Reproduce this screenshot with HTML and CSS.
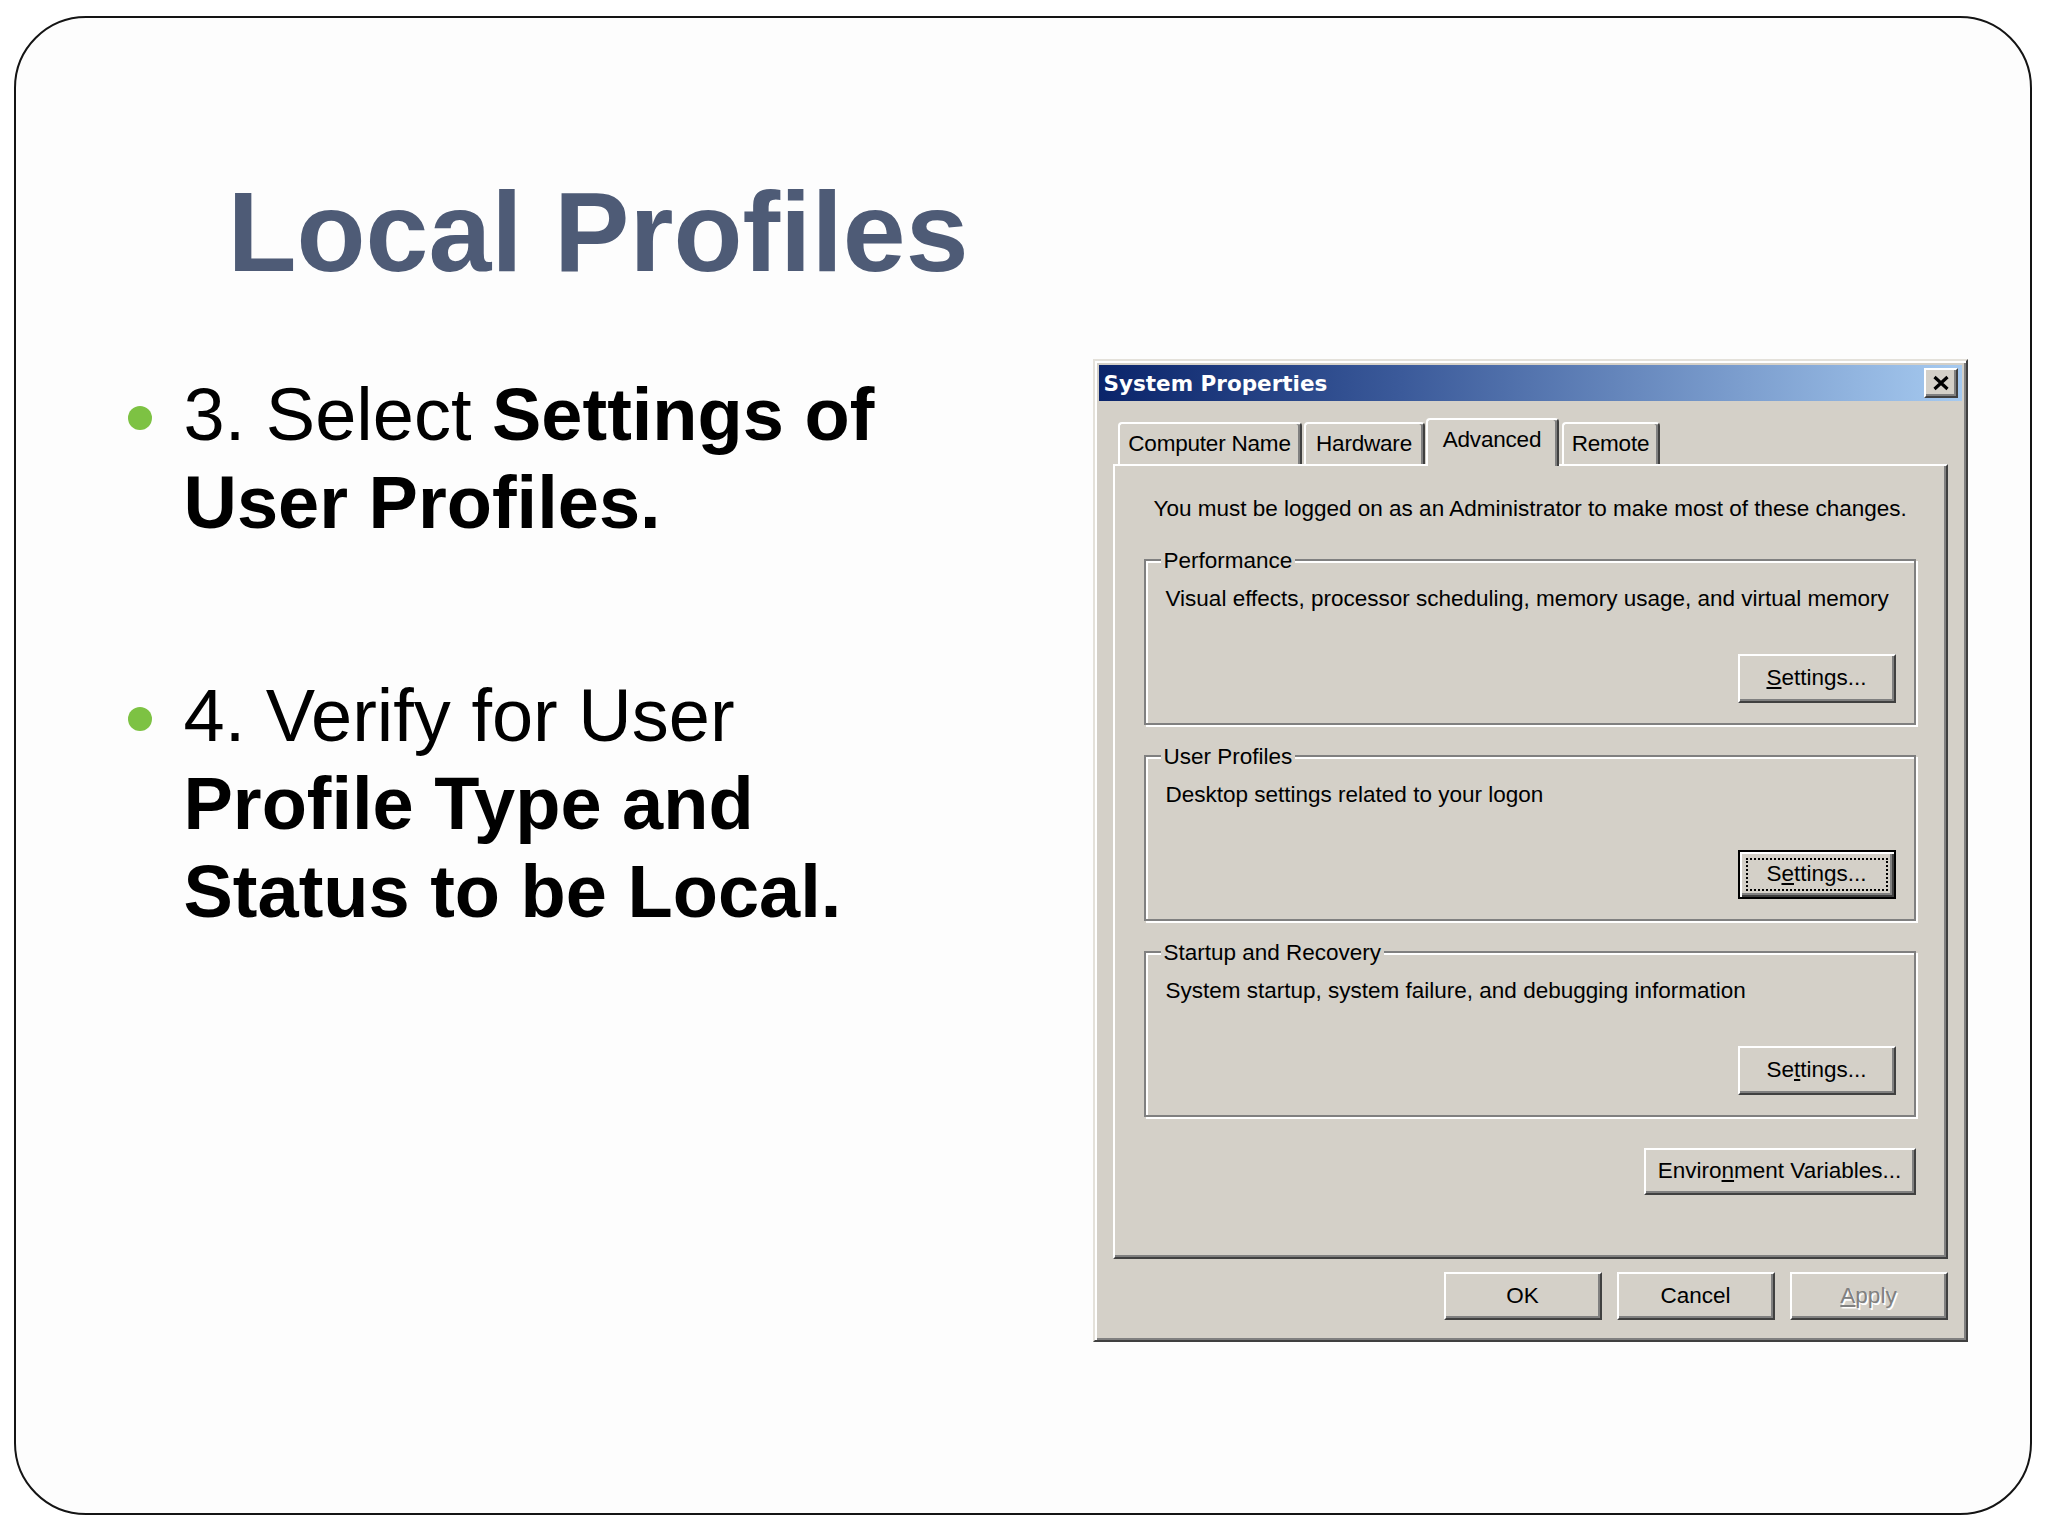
FILE: index.html
```html
<!DOCTYPE html>
<html lang="en">
<head>
<meta charset="utf-8">
<title>Local Profiles</title>
<link rel="stylesheet" href="styles.css">
</head>
<body>
<div class="slide">
  <h1 class="title">Local Profiles</h1>
  <div class="content">
    <ul class="points">
      <li>3. Select <b>Settings of</b><br><b>User Profiles.</b></li>
      <li>4. Verify for User<br><b>Profile Type and</b><br><b>Status to be Local.</b></li>
    </ul>

    <div class="dialog">
      <div class="titlebar">
        <span class="caption">System Properties</span>
        <span class="close">
          <svg width="18" height="16" viewBox="0 0 18 16"><path d="M2.5 2 L15.5 14 M15.5 2 L2.5 14" stroke="#000" stroke-width="3.2" fill="none"/></svg>
        </span>
      </div>
      <div class="tabs">
        <div class="tab tab-cn">Computer Name</div>
        <div class="tab tab-hw">Hardware</div>
        <div class="tab tab-adv">Advanced</div>
        <div class="tab tab-rm">Remote</div>
      </div>
      <div class="panel">
        <div class="note">You must be logged on as an Administrator to make most of these changes.</div>
        <div class="group group-first">
          <span class="legend">Performance</span>
          <div class="desc">Visual effects, processor scheduling, memory usage, and virtual memory</div>
          <div class="btn btn-group"><u>S</u>ettings...</div>
        </div>
        <div class="group">
          <span class="legend">User Profiles</span>
          <div class="desc">Desktop settings related to your logon</div>
          <div class="btn btn-group btn-focus">S<u>e</u>ttings...</div>
        </div>
        <div class="group">
          <span class="legend">Startup and Recovery</span>
          <div class="desc">System startup, system failure, and debugging information</div>
          <div class="btn btn-group">Se<u>t</u>tings...</div>
        </div>
        <div class="btn btn-env">Enviro<u>n</u>ment Variables...</div>
      </div>
      <div class="actions">
        <div class="btn btn-action">OK</div>
        <div class="btn btn-action">Cancel</div>
        <div class="btn btn-action btn-disabled"><u>A</u>pply</div>
      </div>
    </div>
  </div>
</div>
</body>
</html>
```
FILE: styles.css
```css
* {
  box-sizing: border-box;
}

html,
body {
  margin: 0;
  padding: 0;
  background: #ffffff;
}

body {
  width: 2048px;
  height: 1536px;
  overflow: hidden;
  font-family: "Liberation Sans", Arial, sans-serif;
}

.slide {
  margin: 16px 0 0 14px;
  width: 2018px;
  height: 1499px;
  border: 2.5px solid #141414;
  border-radius: 72px;
  background: #fdfdfd;
  padding: 157.5px 62.5px 0 0;
}

.title {
  margin: 0;
  padding-left: 211.5px;
  font-size: 113px;
  line-height: 112px;
  font-weight: 700;
  color: #4e5b76;
}

.content {
  display: flex;
  justify-content: space-between;
  align-items: flex-start;
  margin-top: 71px;
  padding-left: 167.5px;
}

.points {
  list-style: none;
  margin: 0;
  padding: 12px 0 0;
  width: 760px;
  font-size: 74px;
  line-height: 88px;
  color: #000;
  white-space: nowrap;
}

.points li {
  position: relative;
}

.points li + li {
  margin-top: 125px;
}

.points li::before {
  content: "";
  position: absolute;
  left: -56px;
  top: 35px;
  width: 24px;
  height: 24px;
  border-radius: 50%;
  background: #7dc243;
}

/* ---------- Windows dialog ---------- */

.dialog {
  width: 875px;
  height: 983px;
  display: flex;
  flex-direction: column;
  background: #d4d0c8;
  border: 2px solid;
  border-color: #e4e1da #404040 #404040 #e4e1da;
  box-shadow: inset 2px 2px #ffffff, inset -2px -2px #808080;
  padding: 4px;
  font-size: 22.5px;
  color: #000;
}

.titlebar {
  height: 36px;
  display: flex;
  align-items: center;
  justify-content: space-between;
  padding: 0 4px 0 5px;
  background: linear-gradient(to right, #0a246a 0%, #3b5a9a 35%, #a6caf0 100%);
}

.caption {
  font-family: "DejaVu Sans", sans-serif;
  font-weight: 700;
  font-size: 21.5px;
  color: #ffffff;
  padding-top: 2px;
}

.close {
  width: 34px;
  height: 30px;
  display: flex;
  align-items: center;
  justify-content: center;
  background: #d4d0c8;
  border: 2px solid;
  border-color: #ffffff #404040 #404040 #ffffff;
  box-shadow: inset -2px -2px #808080;
}

.tabs {
  display: flex;
  align-items: flex-end;
  height: 46px;
  margin: 17px 14px 0;
  padding-left: 5px;
}

.tab {
  height: 42px;
  border: 2px solid;
  border-bottom: 0;
  border-color: #ffffff #404040 transparent #ffffff;
  box-shadow: inset -2px 0 #808080;
  border-radius: 4px 4px 0 0;
  padding-top: 6px;
  text-align: center;
  line-height: 28px;
  white-space: nowrap;
  letter-spacing: -0.2px;
}

.tab-cn {
  width: 184px;
  margin-right: 2px;
}

.tab-hw {
  width: 121px;
}

.tab-adv {
  width: 133px;
  height: 48px;
  margin: 0 3px -2px 1px;
  position: relative;
  z-index: 1;
  background: #d4d0c8;
}

.tab-rm {
  width: 98px;
}

.panel {
  flex: 1;
  margin: 0 14px;
  border: 2px solid;
  border-color: #ffffff #404040 #404040 #ffffff;
  box-shadow: inset -2px -2px #808080;
  padding: 29px 30px 0 29px;
  display: flex;
  flex-direction: column;
}

.note {
  margin-left: 10px;
  line-height: 28px;
  white-space: nowrap;
}

.group {
  position: relative;
  height: 166px;
  margin-top: 30px;
  border: 2px solid #808080;
  box-shadow: 2px 2px 0 #ffffff, inset 2px 2px 0 #ffffff;
  padding: 24px 18px 20px 20px;
  display: flex;
  flex-direction: column;
}

.group-first {
  margin-top: 36px;
}

.legend {
  position: absolute;
  top: -14px;
  left: 15px;
  padding: 0 3px;
  background: #d4d0c8;
  line-height: 28px;
  white-space: nowrap;
}

.desc {
  line-height: 28px;
  white-space: nowrap;
}

.btn {
  display: flex;
  align-items: center;
  justify-content: center;
  background: #d4d0c8;
  border: 2px solid;
  border-color: #ffffff #404040 #404040 #ffffff;
  box-shadow: inset -2px -2px #808080;
  line-height: 28px;
  white-space: nowrap;
}

.btn u {
  text-decoration-thickness: 2px;
  text-underline-offset: 2px;
}

.btn-group {
  width: 158px;
  height: 49px;
  margin-top: auto;
  align-self: flex-end;
}

.btn-focus {
  position: relative;
  border-color: #000000;
  box-shadow: inset 2px 2px #ffffff, inset -2px -2px #404040, inset -4px -4px #808080;
}

.btn-focus::after {
  content: "";
  position: absolute;
  inset: 6px;
  border: 2px dotted #000000;
}

.btn-env {
  width: 272px;
  height: 47px;
  margin-top: 31px;
  align-self: flex-end;
}

.actions {
  display: flex;
  justify-content: flex-end;
  gap: 15px;
  margin: 13px 14px 16px 0;
}

.btn-action {
  width: 158px;
  height: 48px;
}

.btn-disabled {
  color: #808080;
  text-shadow: 1.5px 1.5px 0 #ffffff;
}
```
